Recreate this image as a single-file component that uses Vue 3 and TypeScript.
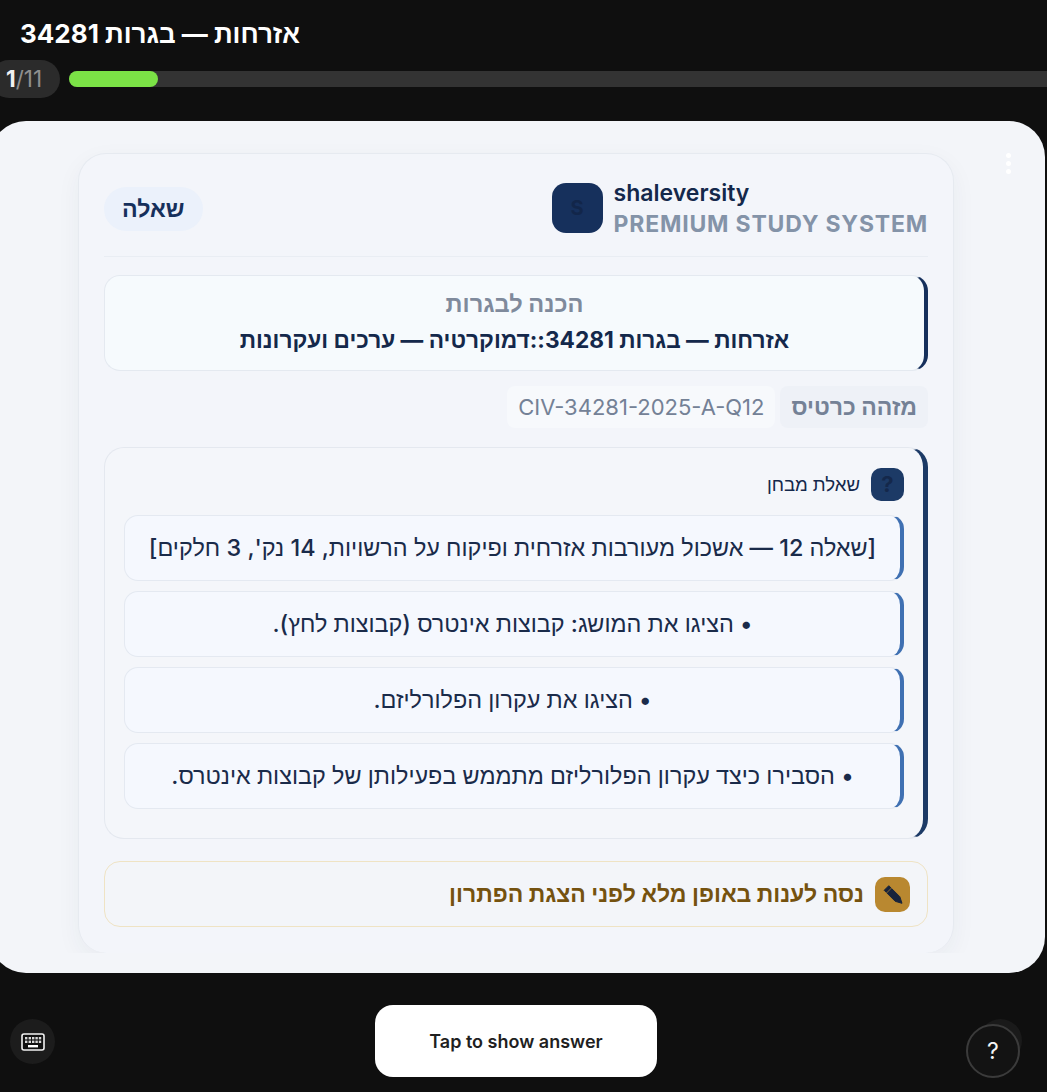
<script setup lang="ts">
const title = "אזרחות — בגרות 34281";
const done = 1;
const total = 11;
const lines = [
  "[שאלה 12 — אשכול מעורבות אזרחית ופיקוח על הרשויות, 14 נק', 3 חלקים]",
  "• הציגו את המושג: קבוצות אינטרס (קבוצות לחץ).",
  "• הציגו את עקרון הפלורליזם.",
  "• הסבירו כיצד עקרון הפלורליזם מתממש בפעילותן של קבוצות אינטרס.",
];
</script>

<template>
  <div class="page">
    <header class="top">
      <h1 class="title" dir="rtl">{{ title }}</h1>
    </header>

    <div class="progress">
      <div class="count"><b>{{ done }}</b>/{{ total }}</div>
      <div class="track"><div class="fill"></div></div>
    </div>

    <main class="sheet">
      <span class="dots"><i></i><i></i><i></i></span>
      <article class="card">
        <div class="head">
          <span class="tag">שאלה</span>
          <div class="brand">
            <div class="logo">S</div>
            <div class="brand-text">
              <div class="brand-name">shaleversity</div>
              <div class="brand-sub">PREMIUM STUDY SYSTEM</div>
            </div>
          </div>
        </div>

        <section class="crumb" dir="rtl">
          <div class="crumb-top">הכנה לבגרות</div>
          <div class="crumb-main">אזרחות — בגרות 34281::דמוקרטיה — ערכים ועקרונות</div>
        </section>

        <div class="ids" dir="rtl">
          <span class="id-label">מזהה כרטיס</span>
          <span class="id-value" dir="ltr">CIV-34281-2025-A-Q12</span>
        </div>

        <section class="question" dir="rtl">
          <div class="q-head">
            <span class="q-icon">?</span>
            <span class="q-title">שאלת מבחן</span>
          </div>
          <div class="q-list">
            <div v-for="line in lines" :key="line" class="q-item">{{ line }}</div>
          </div>
        </section>

        <div class="hint" dir="rtl">
          <span class="hint-icon">
            <svg width="24" height="24" viewBox="0 0 24 24">
              <path d="M7.8 3.7L18.8 14.7L21 21.3L14.2 19.3L3.2 8.3Z" fill="#17233b" stroke="#17233b" stroke-linejoin="round" />
              <path d="M5 11.5L11 5.5" stroke="#b98830" stroke-width="0.7" />
            </svg>
          </span>
          <span class="hint-text">נסה לענות באופן מלא לפני הצגת הפתרון</span>
        </div>
      </article>
    </main>

    <footer class="bottom">
      <button class="show">Tap to show answer</button>
    </footer>

    <button class="keys" aria-label="keyboard">
      <svg width="24" height="18" viewBox="0 0 24 18">
        <rect x="1" y="1" width="22" height="16" rx="2" fill="#111" stroke="#f2f2f2" stroke-width="1.6" />
        <g fill="#d8d8d8">
          <rect x="4" y="4" width="2.4" height="2.4" /><rect x="7.6" y="4" width="2.4" height="2.4" /><rect x="11" y="4" width="2.4" height="2.4" /><rect x="14.4" y="4" width="2.4" height="2.4" /><rect x="17.8" y="4" width="2.4" height="2.4" />
          <rect x="4" y="7.6" width="2.4" height="2.4" /><rect x="7.6" y="7.6" width="2.4" height="2.4" /><rect x="11" y="7.6" width="2.4" height="2.4" /><rect x="14.4" y="7.6" width="2.4" height="2.4" /><rect x="17.8" y="7.6" width="2.4" height="2.4" />
        </g>
        <rect x="7" y="12" width="10" height="2.4" fill="#fff" />
      </svg>
    </button>
    <span class="help-shadow"></span>
    <button class="help">?</button>
  </div>
</template>

<style>
html, body { background: #0f0f0f; overflow: hidden; }
</style>

<style scoped>
.page {
  position: relative;
  height: 1092px;
  width: 1047px;
  overflow: hidden;
  background: #0f0f0f;
  font-family: Inter, "Noto Sans", sans-serif;
}
.top { padding: 17px 20px 0; height: 43px; box-sizing: border-box; }
.title {
  display: inline-block;
  margin: 0;
  font-size: 26px;
  line-height: 34px;
  font-weight: 700;
  color: #fff;
}
.progress {
  display: flex;
  align-items: center;
  gap: 9px;
  height: 38px;
  margin-top: 17px;
  margin-left: -10px;
  margin-right: -10px;
}
.count {
  width: 70px;
  height: 38px;
  box-sizing: border-box;
  padding-left: 16px;
  border-radius: 19px;
  background: #2b2b2b;
  color: #8f8f8f;
  font-size: 22.5px;
  line-height: 38px;
}
.count b { color: #f0f0f0; font-weight: 700; }
.track { flex: 1; height: 16px; border-radius: 8px; background: #333; }
.fill { width: 89px; height: 16px; border-radius: 8px; background: #7be246; }

.sheet {
  position: relative;
  box-sizing: border-box;
  height: 852px;
  margin: 23px 2px 0 -10px;
  padding: 32px 91px 20px 88px;
  border-radius: 36px;
  background: #f3f5f9;
}
.dots {
  position: absolute;
  top: 32px;
  right: 34px;
  display: flex;
  flex-direction: column;
  gap: 3px;
}
.dots i { width: 5px; height: 5px; border-radius: 50%; background: #fff; }

.card {
  box-sizing: border-box;
  height: 800px;
  padding: 29px 25px 0;
  border: 1px solid #e6eaf0;
  border-bottom: 0;
  border-radius: 28px;
  background: #f3f5fa;
  box-shadow: 0 8px 24px rgba(30, 50, 80, 0.05);
  clip-path: inset(-30px -30px 0 -30px);
}
.head {
  display: flex;
  justify-content: space-between;
  align-items: center;
  height: 50px;
  padding-bottom: 23px;
  border-bottom: 1px solid #e9edf3;
}
.tag {
  margin-top: 2px;
  padding: 0 18px;
  height: 44px;
  line-height: 44px;
  border-radius: 22px;
  background: #ebf1fb;
  color: #16305c;
  font-size: 23.2px;
  font-weight: 700;
}
.brand { display: flex; align-items: center; gap: 11px; }
.logo {
  width: 51px;
  height: 50px;
  border-radius: 14px;
  background: #16305c;
  color: #12264a;
  font-size: 20px;
  font-weight: 700;
  line-height: 50px;
  text-align: center;
}
.brand-text { padding-top: 2px; }
.brand-name { font-size: 23px; line-height: 30px; font-weight: 600; color: #14284b; }
.brand-sub {
  font-size: 23px;
  line-height: 32px;
  font-weight: 700;
  letter-spacing: 0.8px;
  color: #8493a8;
}

.crumb {
  height: 96px;
  box-sizing: border-box;
  margin-top: 18px;
  padding-top: 10px;
  border: 1px solid #e4e9f0;
  border-right: 4px solid #16305c;
  border-radius: 16px;
  background: #f6fafd;
  text-align: center;
  font-weight: 700;
  line-height: 36px;
}
.crumb-top { color: #7f8a9c; font-size: 23.6px; }
.crumb-main { color: #14284b; font-size: 22.7px; }

.ids {
  display: flex;
  gap: 5px;
  height: 42px;
  margin-top: 15px;
  line-height: 42px;
}
.id-label {
  padding: 0 11px;
  border-radius: 8px;
  background: #eef1f7;
  color: #748196;
  font-size: 23px;
  font-weight: 700;
}
.id-value {
  padding: 0 11px;
  border-radius: 8px;
  background: #f7f9fc;
  color: #748196;
  font-size: 22px;
}

.question {
  height: 392px;
  box-sizing: border-box;
  margin-top: 19px;
  padding: 20px 19px 0 19px;
  border: 1px solid #e4e8ef;
  border-right: 5px solid #1c3a66;
  border-radius: 20px;
  background: #f4f6fa;
}
.q-head { display: flex; align-items: center; gap: 11px; height: 33px; }
.q-icon {
  width: 33px;
  height: 33px;
  border-radius: 10px;
  background: #1c3a66;
  color: #14284b;
  font-size: 22px;
  font-weight: 700;
  line-height: 33px;
  text-align: center;
}
.q-title { font-size: 18.6px; font-weight: 500; color: #14284b; }
.q-list { display: flex; flex-direction: column; gap: 10px; margin-top: 14px; }
.q-item {
  height: 66px;
  box-sizing: border-box;
  border: 1px solid #e4e9f1;
  border-right: 4px solid #3f70b2;
  border-radius: 14px;
  background: #f5f8fe;
  color: #1a2b4a;
  font-size: 23.4px;
  font-weight: 500;
  line-height: 64px;
  text-align: center;
}

.hint {
  display: flex;
  align-items: center;
  gap: 11px;
  height: 66px;
  box-sizing: border-box;
  margin-top: 22px;
  padding: 0 17px;
  border: 1px solid #efe3c4;
  border-radius: 16px;
  background: #f3f5f9;
}
.hint-icon {
  display: flex;
  align-items: center;
  justify-content: center;
  width: 35px;
  height: 35px;
  border-radius: 10px;
  background: #b98830;
}
.hint-text { font-size: 23px; font-weight: 700; color: #75520f; }

.bottom { display: flex; padding: 32px 0 0 375px; }
.show {
  width: 282px;
  height: 72px;
  border: 0;
  border-radius: 18px;
  background: #fff;
  color: #1f1f1f;
  font-family: inherit;
  font-size: 18px;
  font-weight: 600;
}
.keys {
  position: absolute;
  left: 10px;
  top: 1019px;
  display: flex;
  align-items: center;
  justify-content: center;
  width: 45px;
  height: 45px;
  padding: 0;
  border: 0;
  border-radius: 50%;
  background: #1c1c1c;
}
.help-shadow {
  position: absolute;
  left: 979px;
  top: 1019px;
  width: 43px;
  height: 43px;
  border-radius: 50%;
  background: #1a1a1a;
}
.help {
  position: absolute;
  left: 966px;
  top: 1024px;
  width: 54px;
  height: 54px;
  padding: 0;
  border: 2px solid #3b3b3b;
  border-radius: 50%;
  background: #131313;
  color: #f4f4f4;
  font-family: inherit;
  font-size: 23px;
}
</style>
